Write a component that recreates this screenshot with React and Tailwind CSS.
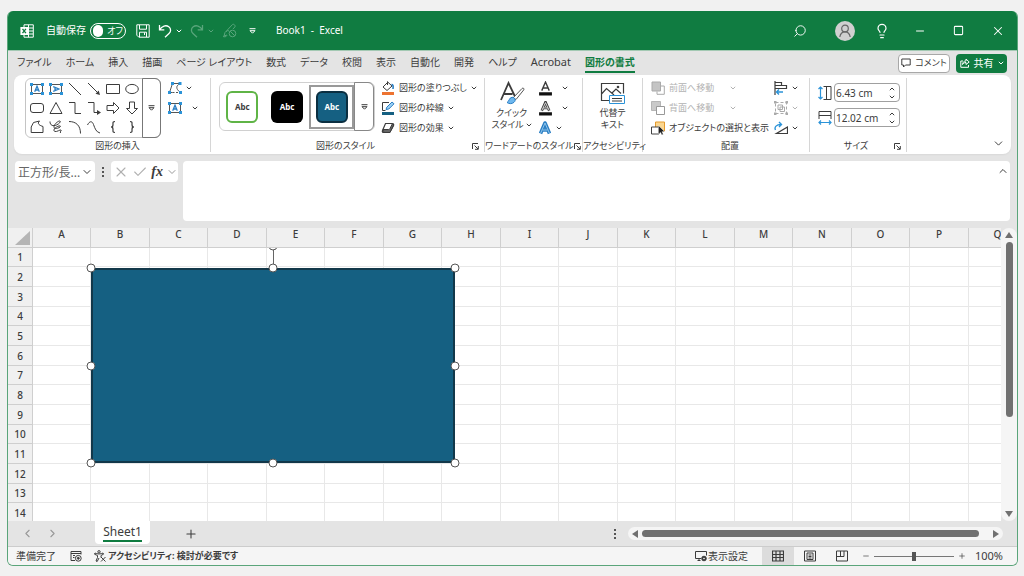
import { useState } from 'react';
import { ChevronDown, ChevronUp, ChevronLeft, ChevronRight, Search, Lightbulb, X, Check, Minus, Plus, Square } from 'lucide-react';

const TABS = ['ファイル', 'ホーム', '挿入', '描画', 'ページ レイアウト', '数式', 'データ', '校閲', '表示', '自動化', '開発', 'ヘルプ', 'Acrobat', '図形の書式'];
const COLUMNS = 'ABCDEFGHIJKLMNOPQ'.split('');
const ROWS = Array.from({ length: 14 }, (_, i) => i + 1);

// --- Icons ---

const Svg = ({ size = 14, w, h, box = '0 0 14 14', className = '', children }) => (
    <svg width={w || size} height={h || size} viewBox={box} fill="none" stroke="currentColor" strokeWidth="1" className={`shrink-0 ${className}`} aria-hidden="true">
        {children}
    </svg>
);

const Caret = ({ className = '' }) => (
    <Svg w={6} h={4} box="0 0 6 4" className={className}><path d="M.8.8 3 3 5.200.8" strokeWidth="1" /></Svg>
);

const MoreIcon = ({ className = '' }) => (
    <Svg w={7} h={6} box="0 0 7 6" className={className}><path d="M.5.7h6M1 2.700h5L3.500 5.200z" /></Svg>
);

const ExcelIcon = () => (
    <Svg className="text-white">
        <path d="M4 3V.8h9.300v12.400H4V11M8.500.8v12.400M8 4h5M8 7h5M8 10h5" />
        <path d="M.4 3h7.600v8H.4z" fill="white" stroke="none" />
        <path d="m2.500 4.800 3.400 4.400M5.900 4.800 2.500 9.200" stroke="#107c41" strokeWidth="1.300" />
    </Svg>
);

const SaveIcon = () => (
    <Svg><path d="M.8.8h12.400v12.400H2.800l-2-2zM3.500 1v4.200h7V1M3.500 13V8.200h7V13M8.500 8.500V11" /></Svg>
);

const UndoIcon = ({ className = '' }) => (
    <Svg className={className}><path d="M1.500 1v4.800h4.800M1.700 5.600C3.800 2 8 .6 10.800 2.800c2.500 2 2.200 4.800.2 6.700L7 13.300" strokeWidth="1.300" /></Svg>
);

const PenOffIcon = () => (
    <Svg size={15} box="0 0 15 15">
        <path d="M3 9.500 10.500 1.500c1-1 3.500 1 2.300 2.500L11 6M3 9.500l-1 3.500 3-1M1 13.500c1.500.5 3 .5 4-1M4.500 9c0-2 2.500-2 2.500-.5" />
        <circle cx="10.500" cy="10.500" r="3.300" /><path d="m8.200 8.200 4.600 4.600" />
    </Svg>
);

const PersonIcon = () => (
    <Svg><circle cx="7" cy="4.500" r="3.300" strokeWidth="1.200" /><path d="M1.800 13c.5-3.500 2.200-5.200 5.200-5.200s4.700 1.700 5.200 5.200" strokeWidth="1.200" /></Svg>
);

// small blue corner handles shared by the text box and edit-points icons
const Corners = () => (
    <g fill="#2b93d8" stroke="none">
        <path d="M0 1h3v3H0zM11 1h3v3h-3zM0 10h3v3H0zM11 10h3v3h-3z" />
    </g>
);

const TextBoxIcon = ({ vertical }) => (
    <Svg className="text-[#555]">
        <path d="M1.500 2.500h11v9h-11z" />
        <g transform={vertical ? 'rotate(90 7 7)' : undefined}><path d="M4.700 9.800 7 4.200l2.300 5.600M5.500 8h3" stroke="#2b7fc4" strokeWidth="1.300" /></g>
        <Corners />
    </Svg>
);

const EditShapeIcon = () => (
    <Svg className="text-[#555]">
        <path d="M4.500 2.500 1.500 11.500h3M4.500 2.500H11M12 3c-4 1-4.500 5 0 8" />
        <path d="M4.500 11.500H11" strokeDasharray="2 1.500" />
        <path d="M3 1h3v3H3zM10.500 1h3v3h-3zM0 10h3v3H0zM11 10h3v3h-3z" fill="#2b93d8" stroke="none" />
    </Svg>
);

const SHAPES = [
    { name: 'テキスト ボックス', icon: <TextBoxIcon /> },
    { name: '縦書きテキスト ボックス', icon: <TextBoxIcon vertical /> },
    { name: '直線', icon: <Svg><path d="m1 1 12 12" /></Svg> },
    { name: '矢印', icon: <Svg><path d="m1 1 11 11" /><path d="M13 13 8.500 11.700l3.200-3.200z" fill="currentColor" stroke="none" /></Svg> },
    { name: '正方形/長方形', icon: <Svg><path d="M.5 2.500h13v9H.5z" /></Svg> },
    { name: '楕円', icon: <Svg><ellipse cx="7" cy="7" rx="6.300" ry="4.600" /></Svg> },
    { name: '角丸四角形', icon: <Svg><rect x=".5" y="2.500" width="13" height="9" rx="2.500" /></Svg> },
    { name: '二等辺三角形', icon: <Svg><path d="M7 1.500 13 12.500H1z" /></Svg> },
    { name: 'コネクタ', icon: <Svg><path d="M1 1.500h6v11h6" /></Svg> },
    { name: '矢印コネクタ', icon: <Svg><path d="M1 1.500h6v10h4" /><path d="m10 9 4 2.500-4 2.500z" fill="currentColor" stroke="none" /></Svg> },
    { name: '右矢印', icon: <Svg><path d="M1 4.500h6.500v-3L13 7l-5.500 5.500v-3H1z" /></Svg> },
    { name: '下矢印', icon: <Svg><path d="M4.500 1h5v6.500h3L7 13 1.500 7.500h3z" /></Svg> },
    { name: 'フリーフォーム', icon: <Svg><path d="M3.500 2.500 9.500 1c-3 3 .5 4.500 3.500 5.500v6H1.200V7z" /></Svg> },
    { name: 'フリーハンド', icon: <Svg><path d="M1 1.500c0 4 3 5 6.500 3.500 3-1.300 4.500-3.500 3.500-4S5.500 3.500 5 6.500s4.500 2 6 .5-1-1.500-3.500 0S4 11 6 11.500s5-2 6-1.500-1.500 1.500-.5 3" /></Svg> },
    { name: '円弧', icon: <Svg><path d="M1 1.500c7 0 11.500 4 11.500 12" /></Svg> },
    { name: '曲線', icon: <Svg><path d="M.5 5c2-4 4.500-4.500 6-.5s2.500 7.500 6.500 8.500" /></Svg> },
    { name: '左中かっこ', icon: <Svg><path d="M9 1.500c-2.500 0-2 1-2 3S6.500 7 5 7c1.500 0 2 .5 2 2.500s-.5 3 2 3" strokeWidth="1.200" /></Svg> },
    { name: '右中かっこ', icon: <Svg><path d="M5 1.500c2.500 0 2 1 2 3S7.500 7 9 7c-1.500 0-2 .5-2 2.500s.5 3-2 3" strokeWidth="1.200" /></Svg> },
];

const FillIcon = () => (
    <Svg>
        <path d="M7 1 2 6l4 3.500 5-4.500L6.500.800M6.500.5V4" />
        <path d="M10.500 3.500c1.500 0 2 1 1.500 4.500" stroke="#2b7fc4" strokeWidth="1.600" />
        <path d="M1 11h12v3H1z" fill="#ed7331" stroke="none" />
    </Svg>
);

const OutlineIcon = () => (
    <Svg>
        <path d="M8 1.500H1.500v8h3" />
        <path d="m5 8.500.8-2.300L11 1l2 1.800-5.200 5.200z" fill="#9bd0f5" stroke="#2b7fc4" />
        <path d="M1 11h12v3H1z" fill="#156082" stroke="none" />
    </Svg>
);

const EffectIcon = () => (
    <Svg>
        <path d="M4.500 2.500H11c1.500 0 2 .5 1.500 2l-1.500 3-2.500 4H3c-1.500 0-2-.5-1.500-2z" strokeWidth="1.200" />
        <path d="M2 8.500h5.500c.800 0 1 0 1.400-.8l2.500-5 1.100 1.500-3.500 7.300H3z" fill="#666" />
    </Svg>
);

const QuickStyleIcon = () => (
    <Svg w={26} h={24} box="0 0 26 24">
        <path d="M2 19 9.500 2 16 15.500M5 13h8.500" strokeWidth="1.800" />
        <path d="m14 17 9-9.500c1-1 2.500 0 1.800 1.300L17 18.500z" fill="white" stroke="#555" />
        <path d="M8 21.500c2-.5 2-5 5-5.200 3-.1 4.300 3 2 5-2 1.800-5 1.700-7 .2z" fill="#6db7ee" stroke="#2b7fc4" />
    </Svg>
);

const LetterIcon = ({ outline }) => (
    <Svg size={15} box="0 0 14 14">
        <path d="M3.500 9 7 1l3.500 8M4.700 6.500h4.600" strokeWidth={outline ? 2.4 : 1.3} />
        {outline && <path d="M3.500 9 7 1.500l3.500 7.500M4.700 6.500h4.600" stroke="#eee" strokeWidth=".8" />}
        <path d="M1 10.500h12v3H1z" fill="#111" stroke="none" />
    </Svg>
);

const TextEffectIcon = () => (
    <Svg>
        <path d="M2.500 12.500 7 2l4.500 10.500M4.500 9h5" stroke="#2b7fc4" strokeWidth="3.600" strokeLinejoin="round" />
        <path d="M2.500 12.500 7 2l4.500 10.500M4.500 9h5" stroke="#a9d5f5" strokeWidth=".8" />
    </Svg>
);

const AltTextIcon = () => (
    <Svg w={25} h={23} box="0 0 25 23">
        <path d="M9 18.500H1.500v-17h22v10M1.500 12l5-5.500L14 13M12 11l4-4 5 4.500" strokeWidth="1.200" />
        <circle cx="18" cy="5" r="1.300" fill="currentColor" stroke="none" />
        <path d="M9.500 13.500h15v8h-15z" fill="white" stroke="#2b93d8" />
        <path d="M12 16.500h10M12 19h10" />
    </Svg>
);

const FrontIcon = () => (
    <Svg><path d="M1 1h8.500v9H1z" fill="#c4c4c4" stroke="#aaa" /><path d="M10 5h3.300v8.300H6V10.500" stroke="#aaa" /></Svg>
);

const BackIcon = () => (
    <Svg><path d="M.5.5h9v9h-9z" fill="#c9c9c9" stroke="#b5b5b5" /><path d="M5.500 5.500h8v8h-8z" fill="white" stroke="#999" /></Svg>
);

const SelectPaneIcon = () => (
    <Svg>
        <path d="M4.500 1h9v9h-9z" fill="#fbd68f" stroke="#e59a2c" />
        <path d="M.5 6h7.500v7H.5z" fill="white" stroke="#444" />
        <path d="m7.500 4.500 6 6-2.500.2 1.300 2.600-1.500.7-1.200-2.600-2.100 1.600z" fill="#222" stroke="white" strokeWidth=".4" />
    </Svg>
);

const AlignIcon = () => (
    <Svg>
        <path d="M1 0v14M1 1.500h6.500v3M1 4.500h11.500v3H1" strokeWidth="1.200" />
        <path d="M2.500 11H9M5 8.500 2.500 11 5 13.500" stroke="#2b93d8" strokeWidth="1.400" />
    </Svg>
);

const GroupIcon = () => (
    <Svg className="text-[#aaa]">
        <path d="M1.500 1.500h11v11h-11z" strokeDasharray="3 2" /><path d="M4 4h4.500v4.500H4zM6 6h4.500v4.500H6z" />
        <path d="M0 0h2.500v2.500H0zM11.500 0H14v2.500h-2.500zM0 11.500h2.500V14H0zM11.500 11.500H14V14h-2.500z" fill="#aaa" stroke="none" />
    </Svg>
);

const RotateIcon = () => (
    <Svg>
        <path d="M13.500 6v6.500h-11z" strokeWidth="1.200" />
        <path d="M1.500 9C0 6 2.500 3.500 7 3.500M5 1l2.500 2.500L5 6" stroke="#2b93d8" strokeWidth="1.400" />
    </Svg>
);

const HeightIcon = () => (
    <Svg>
        <path d="M2.500 1v12M.5 3l2-2 2 2M.5 11l2 2 2-2" stroke="#2b93d8" strokeWidth="1.200" />
        <path d="M5.500.5h4M5.500 13.500h4M8.500.5h4.500v13H8.500z" />
    </Svg>
);

const WidthIcon = () => (
    <Svg>
        <path d="M1 4.500h12V8M1 8V.5h12v4" />
        <path d="M1 11.500h12M3 9.500l-2 2 2 2M11 9.500l2 2-2 2" stroke="#2b93d8" strokeWidth="1.200" />
    </Svg>
);

const LauncherIcon = () => (
    <Svg size={7} box="0 0 7 7"><path d="M.5 6V.5H6M2.500 2.500l3.500 3.500M6.300 3v3.300H3" /></Svg>
);

const MacroIcon = () => (
    <Svg size={12} box="0 0 12 12">
        <path d="M5 10.500H1v-9h10v3M1 3.500h10M3 5.500h2M3 7.500h1.500" />
        <circle cx="8.300" cy="8.300" r="2.900" /><circle cx="8.300" cy="8.300" r="1" fill="currentColor" />
    </Svg>
);

const AccessIcon = () => (
    <Svg size={12} box="0 0 12 12">
        <circle cx="5" cy="1.800" r="1.200" />
        <path d="M1 3c2 1.300 6 1.300 8 0l.5 1.200L7 5.500v2M1 3 .5 4.200 3.500 5.500v2L2 11l1.200.5L5 8M7 7l4.500 4.500M11.500 7 7 11.500" />
    </Svg>
);

const DisplayIcon = () => (
    <Svg size={12} box="0 0 12 12">
        <path d="M6 8.500H.5v-7h11v4M2.500 10.500h3M4 8.500v2" />
        <circle cx="9" cy="8.500" r="2.300" fill="currentColor" /><circle cx="9" cy="8.500" r=".8" fill="white" stroke="none" />
    </Svg>
);

// --- UI Components ---

const Group = ({ label, width, launcher, children }) => (
    <section className={`flex shrink-0 flex-col justify-between border-r border-[#d6d6d6] ${width}`} aria-label={label}>
        <div className="flex h-[60px]">{children}</div>
        <div className="flex h-3 items-center">
            <p className="flex flex-1 justify-center whitespace-nowrap leading-3">{label}</p>
            {launcher && <button className="w-3" aria-label={`${label}の設定`}><LauncherIcon /></button>}
        </div>
    </section>
);

const RibbonItem = ({ icon, text, disabled }) => (
    <button className={`flex h-5 items-center gap-1 whitespace-nowrap ${disabled ? 'text-[#b3b3b3]' : ''}`}>
        {icon}<span>{text}</span>
    </button>
);

const IconMenu = ({ icon, label, gap = 'gap-2', muted }) => (
    <button className={`flex h-5 items-center ${gap} ${muted ? 'text-[#b3b3b3]' : ''}`} aria-label={label}>{icon}<Caret /></button>
);

const SizeField = ({ id, label, icon, defaultValue }) => (
    <div className="flex items-center gap-0.5">
        <label htmlFor={id} aria-label={label}>{icon}</label>
        <div className="flex h-[19px] w-[66px] items-center rounded border border-[#a0a0a0]">
            <input id={id} className="w-full min-w-0 pl-px text-[10px] leading-4 outline-none" defaultValue={defaultValue} />
            <div className="flex flex-col gap-1 pr-1">
                <button aria-label={`${label}を増やす`}><Caret className="rotate-180" /></button>
                <button aria-label={`${label}を減らす`}><Caret /></button>
            </div>
        </div>
    </div>
);

const StyleTile = ({ className, selected }) => (
    <button className={`flex h-11 w-[45px] items-center justify-center ${selected ? 'border-2 border-[#999]' : ''}`}>
        <span className={`flex size-8 items-center justify-center rounded-md text-[8px] font-bold ${className}`}>Abc</span>
    </button>
);

const Handle = ({ className }) => (
    <span className={`absolute size-[9px] -translate-1/2 rounded-full border-[1.5px] border-[#555] bg-white ${className}`}></span>
);

const Dots = () => (
    <span className="flex flex-col gap-0.5">
        <span className="size-0.5 bg-[#555]"></span><span className="size-0.5 bg-[#555]"></span><span className="size-0.5 bg-[#555]"></span>
    </span>
);

const TitleBar = () => {
    const [autoSave, setAutoSave] = useState(false);
    return (
        <header className="flex h-[39px] shrink-0 items-center justify-between bg-[#107c41] pl-3 text-[10px] text-white">
            <div className="flex items-center">
                <ExcelIcon />
                <label className="ml-3 flex items-center gap-1 whitespace-nowrap">
                    自動保存
                    <input type="checkbox" role="switch" className="sr-only" checked={autoSave} onChange={e => setAutoSave(e.target.checked)} />
                    <span className={`flex h-4 w-9 items-center gap-1 rounded-full border border-white px-0.5 ${autoSave ? 'flex-row-reverse' : ''}`}>
                        <span className="size-3 rounded-full bg-white"></span>
                        <span className="text-[9px] leading-3">{autoSave ? 'オン' : 'オフ'}</span>
                    </span>
                </label>
                <button className="ml-[10px]" aria-label="上書き保存"><SaveIcon /></button>
                <button className="ml-2 flex items-center gap-1" aria-label="元に戻す"><UndoIcon /><Caret /></button>
                <button className="ml-2 flex items-center gap-1 text-[#58a57b]" aria-label="やり直し"><UndoIcon className="-scale-x-100" /><Caret /></button>
                <button className="ml-2 text-[#58a57b]" aria-label="インク"><PenOffIcon /></button>
                <button className="ml-3" aria-label="クイック アクセス"><MoreIcon /></button>
                <h1 className="ml-5 whitespace-pre">Book1  -  Excel</h1>
            </div>
            <div className="flex items-center">
                <button className="mr-7" aria-label="検索"><Search size={14} strokeWidth={1.6} className="-scale-x-100" /></button>
                <button className="mr-2 flex size-5 items-center justify-center rounded-full bg-[#d0d0d0] text-[#666]" aria-label="アカウント"><PersonIcon /></button>
                <button className="flex w-[37px] justify-center" aria-label="ヒント"><Lightbulb size={16} strokeWidth={1.8} /></button>
                <button className="flex w-[39px] justify-center" aria-label="最小化"><Minus size={12} strokeWidth={2} /></button>
                <button className="flex w-[39px] justify-center" aria-label="最大化"><Square size={11} strokeWidth={2.2} /></button>
                <button className="flex w-[39px] justify-center" aria-label="閉じる"><X size={14} strokeWidth={1.8} /></button>
            </div>
        </header>
    );
};

const RibbonTabs = () => (
    <nav className="flex h-[25px] shrink-0 items-center justify-between border-t border-[#a3c9b3] pr-[10px] pl-[9px] text-[10px]">
        <div className="flex gap-[14px] whitespace-nowrap">
            {TABS.map(tab => (
                <a key={tab} href="#" className={`flex h-5 items-center border-b-2 ${tab === '図形の書式' ? 'border-[#107c41] font-bold text-[#107c41]' : 'border-transparent'} ${tab === 'Acrobat' ? 'text-[11px]' : ''}`}>{tab}</a>
            ))}
        </div>
        <div className="flex gap-1.5">
            <button className="flex h-[19px] w-[52px] items-center justify-center gap-1 rounded border border-[#a8a8a8] bg-white text-[9px]">
                <Svg size={10} box="0 0 10 10"><path d="M.8 1h8.400v6H4.500L2.500 9V7H.8z" /></Svg>コメント
            </button>
            <button className="flex h-[19px] w-[51px] items-center justify-center gap-1 rounded bg-[#107c41] text-white">
                <Svg size={10} box="0 0 10 10"><path d="M3 3H.8v6.300h7.700V7M2.500 6.500C2.800 4 4 3 6 3V1l3.200 3L6 6.500v-2C4.500 4.500 3.500 5 2.500 6.500z" /></Svg>共有<Caret />
            </button>
        </div>
    </nav>
);

const Ribbon = () => (
    <div className="mx-1.5 flex h-[79px] shrink-0 rounded-lg bg-white pt-[3px] pb-0.5 text-[9px] shadow-xs">
        <Group label="図形の挿入" width="w-[197px] pl-[11px]">
            <div className="flex h-[60px] w-[136px] rounded-md border border-[#c4c4c4]">
                <div className="grid flex-1 grid-cols-6 p-px">
                    {SHAPES.map(s => <button key={s.name} aria-label={s.name} className="flex items-center justify-center">{s.icon}</button>)}
                </div>
                <button className="-my-px -mr-px flex w-[19px] items-center justify-center rounded-r-md border border-[#777]" aria-label="その他の図形"><MoreIcon /></button>
            </div>
            <div className="ml-[7px] flex flex-col">
                <IconMenu icon={<EditShapeIcon />} label="図形の編集" gap="gap-1" />
                <IconMenu icon={<TextBoxIcon />} label="テキスト ボックス" gap="gap-[10px]" />
            </div>
        </Group>
        <Group label="図形のスタイル" width="w-[274px] pl-2" launcher>
            <div className="mt-1 flex h-[49px] w-[156px] items-center rounded-md border border-[#d0d0d0]">
                <StyleTile className="border-2 border-[#5fb446] bg-white" />
                <StyleTile className="bg-black text-white" />
                <StyleTile className="border-2 border-[#0b2f41] bg-[#156082] text-white" selected />
                <button className="flex h-[49px] w-5 items-center justify-center rounded-r-md border border-[#888]" aria-label="その他のスタイル"><MoreIcon /></button>
            </div>
            <div className="ml-1.5 flex flex-col items-start">
                <RibbonItem icon={<FillIcon />} text={<span className="flex items-center gap-1">図形の塗りつぶし<Caret /></span>} />
                <RibbonItem icon={<OutlineIcon />} text={<span className="flex items-center gap-1">図形の枠線<Caret /></span>} />
                <RibbonItem icon={<EffectIcon />} text={<span className="flex items-center gap-1">図形の効果<Caret /></span>} />
            </div>
        </Group>
        <Group label="ワードアートのスタイル" width="w-[98px]" launcher>
            <button className="flex w-[53px] flex-col items-center pt-[3px] leading-3 whitespace-nowrap">
                <QuickStyleIcon />
                <span className="mt-0.5">クイック</span>
                <span className="flex items-center gap-0.5">スタイル<Caret /></span>
            </button>
            <div className="flex flex-col">
                <IconMenu icon={<LetterIcon />} label="文字の塗りつぶし" gap="gap-[9px]" />
                <IconMenu icon={<LetterIcon outline />} label="文字の輪郭" gap="gap-[9px]" />
                <IconMenu icon={<TextEffectIcon />} label="文字の効果" gap="gap-1" />
            </div>
        </Group>
        <Group label="アクセシビリティ" width="w-[60px]">
            <button className="flex flex-1 flex-col items-center pt-1 leading-3">
                <AltTextIcon />
                <span className="mt-0.5">代替テ</span>
                <span>キスト</span>
            </button>
        </Group>
        <Group label="配置" width="w-[167px] pl-2">
            <div className="flex w-[123px] flex-col">
                <div className="flex items-center gap-4 text-[#b3b3b3]"><RibbonItem icon={<FrontIcon />} text="前面へ移動" disabled /><Caret /></div>
                <div className="flex items-center gap-4 text-[#b3b3b3]"><RibbonItem icon={<BackIcon />} text="背面へ移動" disabled /><Caret /></div>
                <RibbonItem icon={<SelectPaneIcon />} text="オブジェクトの選択と表示" />
            </div>
            <div className="flex flex-col">
                <IconMenu icon={<AlignIcon />} label="配置" gap="gap-1" />
                <IconMenu icon={<GroupIcon />} label="グループ化" gap="gap-1" muted />
                <IconMenu icon={<RotateIcon />} label="回転" gap="gap-1" />
            </div>
        </Group>
        <Group label="サイズ" width="w-[97px] pl-2" launcher>
            <div className="flex flex-col gap-1.5 pt-[5px]">
                <SizeField id="shape-height" label="高さ" icon={<HeightIcon />} defaultValue="6.43 cm" />
                <SizeField id="shape-width" label="幅" icon={<WidthIcon />} defaultValue="12.02 cm" />
            </div>
        </Group>
        <button className="mr-1.5 mb-0.5 ml-auto self-end" aria-label="リボンを折りたたむ"><ChevronDown size={13} strokeWidth={1.8} /></button>
    </div>
);

const FormulaBar = () => (
    <div className="flex shrink-0 items-start gap-[5px] p-[7px]">
        <div className="flex h-[21px] w-20 items-center rounded bg-white pr-0.5">
            <input aria-label="名前ボックス" className="w-full min-w-0 pt-0.5 pl-[3px] text-[12px] text-[#666] outline-none" defaultValue="正方形/長..." />
            <button aria-label="名前の一覧"><ChevronDown size={12} /></button>
        </div>
        <div className="flex h-[21px] w-1.5 items-center justify-center"><Dots /></div>
        <div className="flex h-[21px] w-[67px] items-center justify-between rounded bg-white pl-0.5">
            <button className="text-[#b0b0b0]" aria-label="キャンセル"><X size={16} strokeWidth={1.6} /></button>
            <button className="text-[#b0b0b0]" aria-label="入力"><Check size={16} strokeWidth={1.6} /></button>
            <button className="font-['Liberation_Serif',serif] text-[14px] leading-4 font-bold italic" aria-label="関数の挿入">fx</button>
            <button className="text-[#999]" aria-label="関数の一覧"><ChevronDown size={12} /></button>
        </div>
        <div className="flex h-[60px] flex-1 items-start rounded bg-white pr-px">
            <textarea aria-label="数式バー" className="h-full flex-1 resize-none outline-none"></textarea>
            <button className="mt-1" aria-label="数式バーの折りたたみ"><ChevronUp size={12} /></button>
        </div>
    </div>
);

const Sheet = () => (
    <div className="flex min-h-0 flex-1">
        <div className="relative min-w-0 flex-1 overflow-hidden bg-white">
            <table className="w-max table-fixed border-separate border-spacing-0 text-[10px] leading-3">
                <thead>
                    <tr className="h-5">
                        <th className="w-[25px] border-r border-b border-[#cfcfcf] bg-[#f0f0f0] p-0" aria-label="すべて選択">
                            <Svg size={16} box="0 0 16 16" className="ml-[7px]"><path d="M15 1v14H0z" fill="#b5b5b5" stroke="none" /></Svg>
                        </th>
                        {COLUMNS.map((c, i) => (
                            <th key={c} scope="col" className={`border-r border-b border-[#cfcfcf] bg-[#f0f0f0] p-0 pb-[7px] font-medium ${i % 2 ? 'w-[59px]' : 'w-[58px]'}`}>{c}</th>
                        ))}
                    </tr>
                </thead>
                <tbody>
                    {ROWS.map(r => (
                        <tr key={r} className={r % 3 === 1 ? 'h-[19px]' : 'h-5'}>
                            <th scope="row" className="border-r border-b border-[#cfcfcf] bg-[#f0f0f0] p-0 font-medium">{r}</th>
                            {COLUMNS.map(c => <td key={c} className="border-r border-b border-[#e8e8e8] p-0"></td>)}
                        </tr>
                    ))}
                </tbody>
            </table>
            {/* drawing layer over the cells */}
            <div className="pointer-events-none absolute inset-0 top-5 left-[25px] overflow-hidden">
                <div className="absolute top-5 left-[58px] h-[195px] w-[364px]">
                    <div className="h-full w-full border-2 border-[#12384a] bg-[#156082]"></div>
                    <span className="absolute -top-5 left-1/2 h-5 w-px bg-[#666]"></span>
                    <Handle className="-top-[22px] left-1/2" />
                    <Handle className="top-0 left-0" />
                    <Handle className="top-0 left-1/2" />
                    <Handle className="top-0 left-full" />
                    <Handle className="top-1/2 left-0" />
                    <Handle className="top-1/2 left-full" />
                    <Handle className="top-full left-0" />
                    <Handle className="top-full left-1/2" />
                    <Handle className="top-full left-full" />
                </div>
            </div>
        </div>
        <div className="flex w-4 shrink-0 flex-col items-center rounded-full bg-[#f5f5f5] py-1 text-[#707070]">
            <Svg w={8} h={6} box="0 0 8 6"><path d="M4 0l4 6H0z" fill="currentColor" stroke="none" /></Svg>
            <div className="mt-1 flex-1"><div className="h-[65%] w-[7px] rounded-full bg-[#707070]"></div></div>
            <Svg w={8} h={6} box="0 0 8 6"><path d="M4 6 0 0h8z" fill="currentColor" stroke="none" /></Svg>
        </div>
    </div>
);

const SheetTabs = () => (
    <div className="flex h-[25px] shrink-0 items-center justify-between pr-[14px] pl-[13px]">
        <div className="flex h-full items-center">
            <button className="text-[#999]" aria-label="前のシート"><ChevronLeft size={13} /></button>
            <button className="ml-3 text-[#999]" aria-label="次のシート"><ChevronRight size={13} /></button>
            <button className="ml-9 flex h-[23px] w-[55px] justify-center self-start rounded-b bg-white text-[12px] leading-[22px]">
                <span className="h-[21px] border-b-2 border-[#107c41]">Sheet1</span>
            </button>
            <button className="ml-[34px]" aria-label="新しいシート"><Plus size={14} strokeWidth={1.8} /></button>
        </div>
        <div className="flex w-[389px] items-center">
            <Dots />
            <div className="ml-3 flex h-[13px] flex-1 items-center rounded-full bg-[#f5f5f5] px-1 text-[#707070]">
                <Svg w={6} h={8} box="0 0 6 8"><path d="M0 4l6-4v8z" fill="currentColor" stroke="none" /></Svg>
                <div className="mx-1 flex-1"><div className="h-[7px] w-[97%] rounded-full bg-[#707070]"></div></div>
                <Svg w={6} h={8} box="0 0 6 8"><path d="M6 4 0 0v8z" fill="currentColor" stroke="none" /></Svg>
            </div>
        </div>
    </div>
);

const StatusBar = () => {
    const [zoom, setZoom] = useState(50);
    return (
        <footer className="flex h-[19px] shrink-0 items-center justify-between border-t border-[#cccccc] bg-[#f5f5f5] pr-[14px] pl-2 text-[10px] leading-3">
            <div className="flex items-center whitespace-nowrap">
                <span>準備完了</span>
                <button className="ml-[14px]" aria-label="マクロの記録"><MacroIcon /></button>
                <button className="ml-3 flex items-center gap-0.5 text-[9px] font-bold"><AccessIcon />アクセシビリティ: 検討が必要です</button>
            </div>
            <div className="flex h-full items-center whitespace-nowrap">
                <button className="mr-[14px] flex items-center gap-px"><DisplayIcon />表示設定</button>
                <button className="flex h-full w-8 items-center justify-center bg-[#dcdcdc]" aria-label="標準">
                    <Svg size={12} box="0 0 12 12"><path d="M.5 1h11v10H.5zM.5 4.500h11M.5 7.500h11M4 1v10M8 1v10" strokeWidth="1.200" /></Svg>
                </button>
                <button className="flex h-full w-8 items-center justify-center" aria-label="ページ レイアウト">
                    <Svg size={12} box="0 0 12 12"><path d="M.5 1h11v10H.5zM3 3h6v6.500H3zM4.500 5h3M4.500 6.500h3M4.500 8h3" /></Svg>
                </button>
                <button className="flex h-full w-8 items-center justify-center" aria-label="改ページ プレビュー">
                    <Svg size={12} box="0 0 12 12"><path d="M.5 1h11v10H.5zM.5 6.500h7.500V1M4.500 1v5.500" /></Svg>
                </button>
                <button className="ml-1" aria-label="縮小"><Minus size={8} /></button>
                <input
                    type="range" aria-label="ズーム" value={zoom} onChange={e => setZoom(Number(e.target.value))}
                    className="mx-1 h-px w-20 appearance-none bg-[#777] [&::-webkit-slider-thumb]:h-[9px] [&::-webkit-slider-thumb]:w-1 [&::-webkit-slider-thumb]:appearance-none [&::-webkit-slider-thumb]:bg-[#555]"
                />
                <button aria-label="拡大"><Plus size={8} /></button>
                <span className="ml-[9px] text-[11px]">100%</span>
            </div>
        </footer>
    );
};

// --- Main ---

export default function App() {
    return (
        <div lang="ja" className="flex h-screen flex-col bg-[#f1f1f1] pt-[11px] pr-1.5 pb-[10px] pl-[7px] font-['Noto_Sans','Noto_Sans_CJK_JP',sans-serif] text-[#3c3c3c] [font-feature-settings:'palt']">
            <div className="flex min-h-0 flex-1 flex-col overflow-hidden rounded-md border border-t-0 border-[#5aa57a] bg-[#e4e4e4]">
                <TitleBar />
                <RibbonTabs />
                <Ribbon />
                <FormulaBar />
                <Sheet />
                <SheetTabs />
                <StatusBar />
            </div>
        </div>
    );
}
